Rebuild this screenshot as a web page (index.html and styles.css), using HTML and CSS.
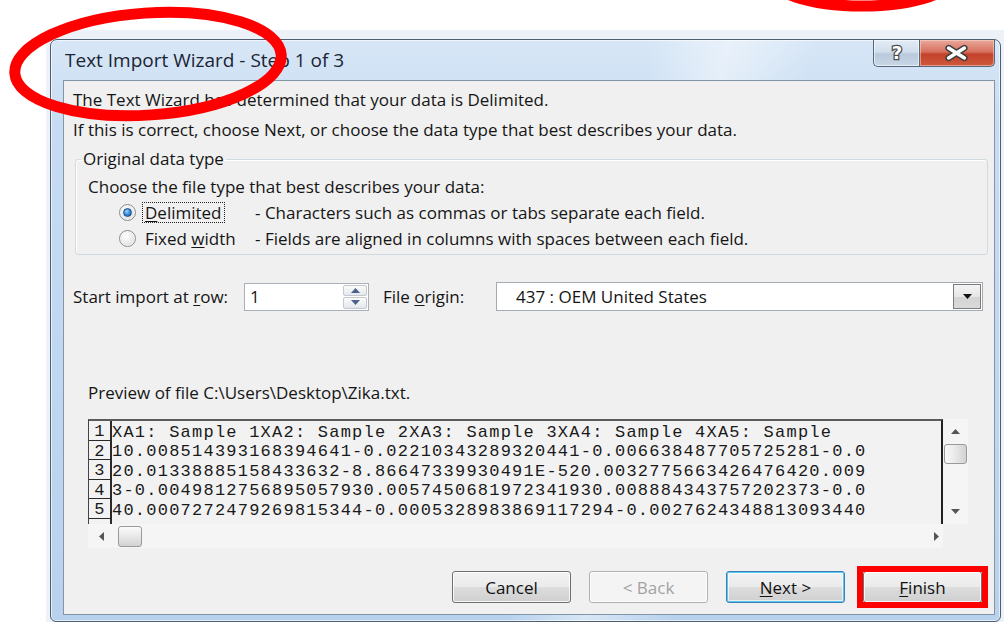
FILE: index.html
```html
<!DOCTYPE html>
<html lang="en">
<head>
<meta charset="utf-8">
<title>Text Import Wizard - Step 1 of 3</title>
<link rel="stylesheet" href="styles.css">
</head>
<body>
<div class="desktop">
  <div class="window">
    <div class="titlebar">
      <span class="title">Text Import Wizard - Step 1 of 3</span>
      <div class="caption-btns">
        <div class="cbtn help">
          <svg width="44" height="26" viewBox="0 0 44 26"><text x="22" y="19" text-anchor="middle" class="qmark">?</text></svg>
        </div>
        <div class="cbtn close">
          <svg width="75" height="26" viewBox="0 0 75 26">
            <path d="M29 8 L45 18 M45 8 L29 18" stroke="#3d3d3d" stroke-width="6.5" stroke-linecap="round"/>
            <path d="M29 8 L45 18 M45 8 L29 18" stroke="#ffffff" stroke-width="3.6" stroke-linecap="round"/>
          </svg>
        </div>
      </div>
    </div>

    <div class="client">
      <p class="line">The Text Wizard has determined that your data is Delimited.</p>
      <p class="line">If this is correct, choose Next, or choose the data type that best describes your data.</p>

      <fieldset class="group">
        <legend>Original data type</legend>
        <p class="choose">Choose the file type that best describes your data:</p>
        <div class="radio-row">
          <span class="radio checked"><span class="dot"></span></span>
          <span class="rlabel"><span class="focus"><u>D</u>elimited</span></span>
          <span class="rdesc">- Characters such as commas or tabs separate each field.</span>
        </div>
        <div class="radio-row">
          <span class="radio"></span>
          <span class="rlabel"><span class="nofocus">Fixed <u>w</u>idth</span></span>
          <span class="rdesc">- Fields are aligned in columns with spaces between each field.</span>
        </div>
      </fieldset>

      <div class="import-row">
        <span class="lbl-start">Start import at <u>r</u>ow:</span>
        <div class="spin">
          <span class="spin-val">1</span>
          <div class="spin-btns">
            <span class="sbtn"><svg width="9" height="5" viewBox="0 0 9 5"><path d="M0 5 L4.5 0 L9 5 Z" fill="#4a628c"/></svg></span>
            <span class="sbtn"><svg width="9" height="5" viewBox="0 0 9 5"><path d="M0 0 L4.5 5 L9 0 Z" fill="#4a628c"/></svg></span>
          </div>
        </div>
        <span class="lbl-origin">File <u>o</u>rigin:</span>
        <div class="combo">
          <span class="combo-val">437 : OEM United States</span>
          <span class="combo-btn"><svg width="9" height="5" viewBox="0 0 9 5"><path d="M0 0 L4.5 5 L9 0 Z" fill="#111"/></svg></span>
        </div>
      </div>

      <p class="preview-label">Preview of file C:\Users\Desktop\Zika.txt.</p>

      <div class="preview">
        <div class="pv-main">
          <div class="pv-text">
            <div class="pv-row"><span class="pv-num">1</span><span class="pv-data">XA1: Sample 1XA2: Sample 2XA3: Sample 3XA4: Sample 4XA5: Sample</span></div>
            <div class="pv-row"><span class="pv-num">2</span><span class="pv-data">10.008514393168394641-0.02210343289320441-0.006638487705725281-0.0</span></div>
            <div class="pv-row"><span class="pv-num">3</span><span class="pv-data">20.01338885158433632-8.86647339930491E-520.0032775663426476420.009</span></div>
            <div class="pv-row"><span class="pv-num">4</span><span class="pv-data">3-0.0049812756895057930.0057450681972341930.008884343757202373-0.0</span></div>
            <div class="pv-row"><span class="pv-num">5</span><span class="pv-data">40.0007272479269815344-0.0005328983869117294-0.0027624348813093440</span></div>
            <div class="pv-row"><span class="pv-num"></span><span class="pv-data"></span></div>
          </div>
          <div class="vscroll">
            <span class="arrow"><svg width="9" height="5" viewBox="0 0 9 5"><path d="M0 5 L4.5 0 L9 5 Z" fill="#555"/></svg></span>
            <span class="vthumb"></span>
            <span class="vtrack"></span>
            <span class="arrow"><svg width="9" height="5" viewBox="0 0 9 5"><path d="M0 0 L4.5 5 L9 0 Z" fill="#555"/></svg></span>
          </div>
        </div>
        <div class="pv-bottom">
          <div class="hscroll">
            <span class="harrow"><svg width="5" height="9" viewBox="0 0 5 9"><path d="M5 0 L0 4.5 L5 9 Z" fill="#555"/></svg></span>
            <span class="hthumb"></span>
            <span class="htrack"></span>
            <span class="harrow"><svg width="5" height="9" viewBox="0 0 5 9"><path d="M0 0 L5 4.5 L0 9 Z" fill="#555"/></svg></span>
          </div>
          <div class="corner"></div>
        </div>
      </div>

      <div class="buttons">
        <span class="btn">Cancel</span>
        <span class="btn disabled">&lt; Back</span>
        <span class="btn default"><u>N</u>ext &gt;</span>
        <span class="btn"><u>F</u>inish</span>
      </div>
    </div>
  </div>
</div>

<svg class="marks" width="1004" height="622" viewBox="0 0 1004 622">
  <ellipse cx="148" cy="64" rx="133.5" ry="51" transform="rotate(-4 148 64)" fill="none" stroke="#f00" stroke-width="11"/>
  <ellipse cx="862" cy="-25" rx="94" ry="31" fill="none" stroke="#f00" stroke-width="11"/>
  <rect x="860" y="569" width="125" height="36" fill="none" stroke="#f00" stroke-width="6"/>
</svg>
</body>
</html>
```

FILE: styles.css
```css
* {
  box-sizing: border-box;
}

html,
body {
  margin: 0;
  padding: 0;
}

body {
  width: 1004px;
  height: 622px;
  overflow: hidden;
  position: relative;
  background: #ffffff;
  font-family: "Open Sans", "Noto Sans", sans-serif;
  font-size: 17px;
  color: #151515;
}

p {
  margin: 0;
}

u {
  text-decoration-thickness: 1px;
  text-underline-offset: 2px;
}

/* desktop strip behind the dialog */
.desktop {
  margin: 30px 0 0 46px;
  height: 592px;
  background: #edf2f8;
  padding: 9px 0 0 4px;
  overflow: hidden;
}

/* Aero window frame */
.window {
  width: 951px;
  height: 583px;
  border: 1px solid #4e5f73;
  border-radius: 7px 7px 6px 6px;
  padding: 0 5px 5px 12px;
  background:
    linear-gradient(104deg, rgba(255, 255, 255, 0) 55%, rgba(255, 255, 255, 0.45) 62%, rgba(255, 255, 255, 0) 70%),
    linear-gradient(180deg, #d8e7f7 0%, #c7dcf2 14%, #b8d2ee 100%);
  box-shadow: inset 0 0 0 1px rgba(255, 255, 255, 0.6);
}

.titlebar {
  height: 40px;
  display: flex;
  justify-content: space-between;
  align-items: flex-start;
}

.title {
  align-self: center;
  padding-left: 2px;
  font-size: 19px;
  color: #1b2432;
  line-height: 40px;
}

.caption-btns {
  display: flex;
}

.cbtn {
  height: 27px;
  border: 1px solid #56687d;
  border-top: none;
  display: flex;
  align-items: center;
  justify-content: center;
}

.cbtn.help {
  width: 46px;
  border-right: none;
  border-radius: 0 0 0 5px;
  background: linear-gradient(180deg, #e4ecf5 0%, #d1deec 45%, #b9cadd 55%, #c9d7e6 100%);
  box-shadow: inset 0 0 0 1px rgba(255, 255, 255, 0.55);
}

.cbtn.close {
  width: 76px;
  border-radius: 0 0 5px 0;
  background: linear-gradient(180deg, #e8a99c 0%, #d7705f 45%, #c3412a 55%, #cf5a3d 100%);
  box-shadow: inset 0 0 0 1px rgba(255, 220, 210, 0.5);
}

.qmark {
  font-family: "DejaVu Sans", sans-serif;
  font-weight: bold;
  font-size: 18px;
  fill: #ffffff;
  stroke: #4d4d4d;
  stroke-width: 2.6px;
  paint-order: stroke;
}

/* dialog body */
.client {
  height: 535px;
  border: 1px solid #8595a8;
  background: #f0f0f0;
  padding: 4px 6px 0 9px;
}

.line {
  line-height: 30px;
}

.group {
  margin: 4px 0 0 2px;
  padding: 0 0 3px 12px;
  border: 1px solid #d0dae1;
  border-radius: 3px;
  box-shadow: inset 1px 1px 0 #ffffff;
}

.group legend {
  margin-left: -7px;
  padding: 0 2px;
  line-height: 20px;
}

.choose {
  margin-top: 6px;
  line-height: 24px;
}

.radio-row {
  display: flex;
  align-items: center;
  height: 26px;
  padding-left: 31px;
}

.radio {
  width: 17px;
  height: 17px;
  border-radius: 50%;
  border: 1px solid #8c8e91;
  background: radial-gradient(circle at 40% 35%, #ffffff 0%, #ededed 45%, #cfd1d3 100%);
  box-shadow: inset 0 0 0 1px #f6f6f6;
  margin-right: 6px;
  display: flex;
  align-items: center;
  justify-content: center;
}

.radio .dot {
  width: 9px;
  height: 9px;
  border-radius: 50%;
  border: 1px solid #1d4f8c;
  background: radial-gradient(circle at 40% 35%, #9fd6fa 0%, #3d8fda 45%, #1a5aa8 100%);
}

.rlabel {
  width: 113px;
  flex: none;
}

.focus,
.nofocus {
  display: inline-block;
  padding: 0 2px;
  line-height: 19px;
  border: 1px dotted transparent;
}

.focus {
  border-color: #222222;
}

.import-row {
  display: flex;
  align-items: center;
  margin-top: 27px;
  height: 29px;
}

.lbl-start {
  width: 171px;
  flex: none;
}

.spin {
  width: 125px;
  height: 28px;
  border: 1px solid #a9b0b8;
  background: #ffffff;
  display: flex;
  align-items: center;
  justify-content: space-between;
  padding: 1px 1px 1px 5px;
}

.spin-btns {
  display: flex;
  flex-direction: column;
  width: 24px;
  height: 100%;
  gap: 1px;
}

.sbtn {
  flex: 1;
  display: flex;
  align-items: center;
  justify-content: center;
  border: 1px solid #c3c9d2;
  border-radius: 2px;
  background: linear-gradient(180deg, #fbfbfb, #e4e7ec);
}

.lbl-origin {
  width: 113px;
  flex: none;
  margin-left: 14px;
}

.combo {
  flex: 1;
  margin-right: 5px;
  height: 29px;
  border: 1px solid #a5abb2;
  background: #ffffff;
  display: flex;
  align-items: center;
  justify-content: space-between;
  padding: 1px;
}

.combo-val {
  padding-left: 18px;
}

.combo-btn {
  width: 28px;
  height: 100%;
  border: 1px solid #7b7b7b;
  background: linear-gradient(180deg, #f4f4f4 0%, #e6e6e6 50%, #d4d4d4 51%, #d9d9d9 100%);
  display: flex;
  align-items: center;
  justify-content: center;
}

.preview-label {
  margin: 72px 0 0 15px;
  line-height: 20px;
}

.preview {
  margin: 16px 0 0 15px;
  width: 880px;
}

.pv-main {
  display: flex;
  height: 105px;
}

.pv-text {
  width: 855px;
  height: 105px;
  border-top: 2px solid #5a5a5a;
  border-left: 1px solid #444;
  border-right: 2px solid #222;
  background: #f2f2f2;
  overflow: hidden;
  font-family: "Liberation Mono", "DejaVu Sans Mono", monospace;
  font-size: 17px;
  letter-spacing: 1.23px;
  color: #1a1a1a;
}

.pv-row {
  display: flex;
  height: 19.5px;
  line-height: 19.5px;
  white-space: pre;
}

.pv-num {
  width: 23px;
  flex: none;
  text-align: center;
  border-right: 2px solid #2a2a2a;
  border-bottom: 1.5px solid #2a2a2a;
  padding-top: 1px;
  padding-left: 1px;
}

.pv-data {
  padding-top: 1.5px;
}

.vscroll {
  width: 25px;
  background: #f5f5f5;
  display: flex;
  flex-direction: column;
  align-items: center;
}

.arrow {
  height: 25px;
  display: flex;
  align-items: center;
  justify-content: center;
}

.vthumb {
  width: 23px;
  height: 20px;
  border: 1px solid #9a9a9a;
  border-radius: 3px;
  background: linear-gradient(90deg, #fbfbfb 0%, #e8e8e8 50%, #d2d2d2 100%);
}

.vtrack {
  flex: 1;
}

.pv-bottom {
  display: flex;
  height: 24px;
}

.hscroll {
  width: 855px;
  background: #f5f5f5;
  display: flex;
  align-items: center;
  padding: 0 2px 0 8px;
}

.harrow {
  width: 10px;
  display: flex;
  justify-content: center;
}

.hthumb {
  width: 24px;
  height: 21px;
  margin-left: 12px;
  border: 1px solid #9a9a9a;
  border-radius: 3px;
  background: linear-gradient(180deg, #fbfbfb 0%, #e8e8e8 50%, #d2d2d2 100%);
}

.htrack {
  flex: 1;
}

.corner {
  width: 25px;
  background: #f0f0f0;
}

.buttons {
  margin-top: 23px;
  display: flex;
  justify-content: flex-end;
  gap: 18px;
  padding-right: 6px;
}

.btn {
  width: 119px;
  height: 32px;
  border: 1px solid #707070;
  border-radius: 3px;
  background: linear-gradient(180deg, #f2f2f2 0%, #ebebeb 49%, #dddddd 50%, #cfcfcf 100%);
  box-shadow: inset 0 0 0 1px rgba(255, 255, 255, 0.8);
  display: flex;
  align-items: center;
  justify-content: center;
  color: #111;
}

.btn.disabled {
  border-color: #adb2b5;
  background: #f4f4f4;
  color: #a2a2a2;
}

.btn.default {
  border-color: #3c7fb1;
  box-shadow: inset 0 0 0 1px #58c8f2, inset 0 0 0 2px rgba(255, 255, 255, 0.6);
}

/* red annotation marks drawn on top */
.marks {
  position: absolute;
  left: 0;
  top: 0;
  pointer-events: none;
}
```
